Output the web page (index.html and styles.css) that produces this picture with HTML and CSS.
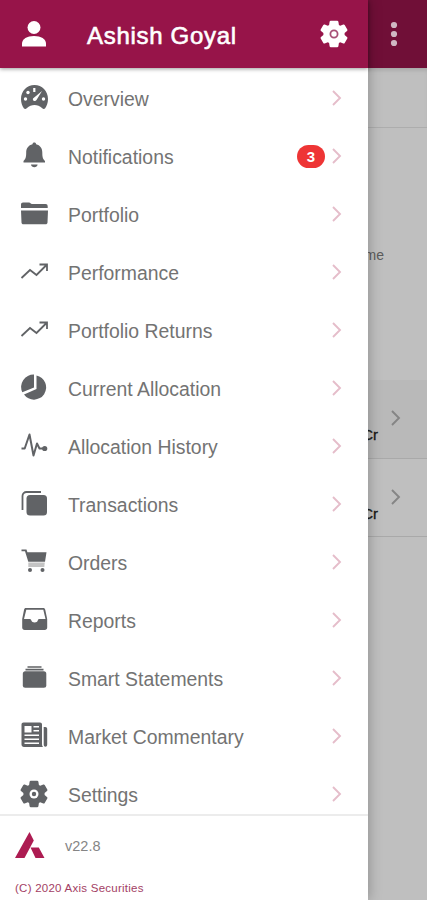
FILE: index.html
```html
<!DOCTYPE html>
<html lang="en">
<head>
    <meta charset="UTF-8">
    <meta name="viewport" content="width=device-width, initial-scale=1.0">
    <title>Axis Securities</title>
    <link rel="stylesheet" href="styles.css">
</head>
<body>
    <!-- Page behind the menu -->
    <div class="page">
        <header class="page-header">
            <svg class="more" viewBox="0 0 8 28"><circle cx="4" cy="4" r="3.1"/><circle cx="4" cy="13" r="3.1"/><circle cx="4" cy="22" r="3.1"/></svg>
        </header>
        <div class="page-tabs"></div>
        <div class="page-summary"><span>me</span></div>
        <div class="page-row shaded">
            <span>Cr</span>
            <svg class="arrow" viewBox="0 0 10 16"><path d="M1 1l7 7-7 7"/></svg>
        </div>
        <div class="page-row">
            <span>Cr</span>
            <svg class="arrow" viewBox="0 0 10 16"><path d="M1 1l7 7-7 7"/></svg>
        </div>
    </div>

    <!-- Side Menu -->
    <aside class="drawer">
        <header class="drawer-header">
            <svg class="user" viewBox="0 0 28 28"><circle cx="14" cy="7.5" r="6.5"/><path d="M2 26.5v-3c0-4.5 5-7.500 12-7.500s12 3 12 7.500v3z"/></svg>
            <h1>Ashish Goyal</h1>
            <svg class="gear" viewBox="0 0 28 28"><use href="#gear"/><circle class="ring" cx="14" cy="14" r="3.6"/></svg>
        </header>

        <nav class="menu">
            <a class="item">
                <svg class="icon" viewBox="0 0 28 28"><path d="M14.500 1C7 1 1 7 1 15c0 4 1.200 7 3 9.500 1 .8 2 .5 3-.5 4-4 11-4 15 0 1 1 2 1.300 3 .5 1.800-2.500 3-5.500 3-9.500 0-8-6-14-13.500-14z"/><g class="cut"><circle cx="5.500" cy="15" r="1.700"/><circle cx="8" cy="8.500" r="1.700"/><path d="M13.200 4h2.200v4h-2.200z"/><circle cx="23.500" cy="15" r="1.700"/><path d="M22 7l-5.500 9c-1 2-4.500 1-3.500-1.500z"/></g></svg>
                <span class="label">Overview</span>
                <svg class="arrow" viewBox="0 0 10 16"><path d="M1 1l7 7-7 7"/></svg>
            </a>
            <a class="item">
                <svg class="icon" viewBox="0 0 28 28"><path d="M14.300.5c1 0 1.800.6 1.800 1.800 4 1 6.200 4 6.200 8.200 0 5 .7 6.500 2.700 8.500v1.500H3.500V19c2-2 2.700-3.500 2.700-8.500 0-4.200 2.300-7.200 6.300-8.200 0-1.200.8-1.800 1.800-1.800zM11 22.500h6.600c-.3 3.500-6.300 3.500-6.600 0z"/></svg>
                <span class="label">Notifications</span>
                <span class="badge">3</span>
                <svg class="arrow" viewBox="0 0 10 16"><path d="M1 1l7 7-7 7"/></svg>
            </a>
            <a class="item">
                <svg class="icon" viewBox="0 0 28 28"><path d="M3 2.500h6c1.500 0 1.500 1.500 3 1.500h13.500c1.500 0 2.200.8 2.200 2.500v1.500H1V4.500c0-1.300.8-2 2-2zM1 10.500h27l-.5 12c0 1-.8 1.800-2 1.800h-22c-1.200 0-2-.8-2-1.800z"/></svg>
                <span class="label">Portfolio</span>
                <svg class="arrow" viewBox="0 0 10 16"><path d="M1 1l7 7-7 7"/></svg>
            </a>
            <a class="item">
                <svg class="icon line" viewBox="0 0 28 28"><path d="M1.500 20l8.500-8 6.500 5L26.500 7M19.500 6.500H27V13"/></svg>
                <span class="label">Performance</span>
                <svg class="arrow" viewBox="0 0 10 16"><path d="M1 1l7 7-7 7"/></svg>
            </a>
            <a class="item">
                <svg class="icon line" viewBox="0 0 28 28"><path d="M1.500 20l8.500-8 6.500 5L26.500 7M19.500 6.500H27V13"/></svg>
                <span class="label">Portfolio Returns</span>
                <svg class="arrow" viewBox="0 0 10 16"><path d="M1 1l7 7-7 7"/></svg>
            </a>
            <a class="item">
                <svg class="icon" viewBox="0 0 28 28"><path d="M14 .5v13L2.300 18.300A12.500 12.500 0 0 1 14 .5zM16.500 1.500A12.200 12.200 0 1 1 4 20.500l12.500-5.500z"/></svg>
                <span class="label">Current Allocation</span>
                <svg class="arrow" viewBox="0 0 10 16"><path d="M1 1l7 7-7 7"/></svg>
            </a>
            <a class="item">
                <svg class="icon pulse" viewBox="0 0 28 28"><path d="M1.500 16.500h3.200L9.500 2.500l4 21 3.500-12 2.500 5h5"/><circle cx="24.700" cy="16.500" r="2.600"/></svg>
                <span class="label">Allocation History</span>
                <svg class="arrow" viewBox="0 0 10 16"><path d="M1 1l7 7-7 7"/></svg>
            </a>
            <a class="item">
                <svg class="icon" viewBox="0 0 28 28"><rect x="6.500" y="5" width="20.500" height="20.500" rx="3.500"/><path class="edge" d="M2.500 20V6A4 4 0 0 1 6.500 2H21"/></svg>
                <span class="label">Transactions</span>
                <svg class="arrow" viewBox="0 0 10 16"><path d="M1 1l7 7-7 7"/></svg>
            </a>
            <a class="item">
                <svg class="icon" viewBox="0 0 28 28"><path d="M1.500 1.500h5l.9 2.700H26.500L25 13.800H8.300L5 3.300H1.500z"/><path class="soft" d="M8.300 14.500h16.500l-.5 4.500H8.300z"/><circle cx="10" cy="22" r="2"/><circle cx="22.500" cy="22" r="2"/></svg>
                <span class="label">Orders</span>
                <svg class="arrow" viewBox="0 0 10 16"><path d="M1 1l7 7-7 7"/></svg>
            </a>
            <a class="item">
                <svg class="icon" viewBox="0 0 28 28"><path fill-rule="evenodd" d="M6 2h17c1.400 0 2 .6 2.300 2L27.200 13v8.500c0 1.500-1 2.500-2.500 2.500h-20c-1.500 0-2.500-1-2.500-2.500V13L4 4c.3-1.400.8-2 2-2zm.3 1.700L4 13h6c1.500 0 1 3.500 4.700 3.500S17.500 13 19 13h6.500L23.300 3.700z"/></svg>
                <span class="label">Reports</span>
                <svg class="arrow" viewBox="0 0 10 16"><path d="M1 1l7 7-7 7"/></svg>
            </a>
            <a class="item">
                <svg class="icon" viewBox="0 0 28 28"><rect x="2.800" y="7.300" width="23.500" height="16.500" rx="2.500"/><path d="M7.500 2.300h14v1.500h-14zM5.500 4.700h18v1.800h-18z"/></svg>
                <span class="label">Smart Statements</span>
                <svg class="arrow" viewBox="0 0 10 16"><path d="M1 1l7 7-7 7"/></svg>
            </a>
            <a class="item">
                <svg class="icon" viewBox="0 0 28 28"><path d="M3.500.5H20c1.200 0 2 .8 2 2V22c0 1.300.3 2.300 1 3H4c-1.500 0-2.500-1-2.500-2.500v-20c0-1.200.8-2 2-2zM23.700 5h1.500c1.300 0 2 .7 2 2v15.500c0 3-3.500 3-3.500 0z"/><path class="cut" d="M4.500 4h7v6.500h-7zM13.500 4H19v1.500h-5.500zM13.500 8H19v1.500h-5.500zM4.500 12.500H19V14H4.500zM4.500 16.500H19V18H4.500zM4.500 20.500H19V22H4.500z"/></svg>
                <span class="label">Market Commentary</span>
                <svg class="arrow" viewBox="0 0 10 16"><path d="M1 1l7 7-7 7"/></svg>
            </a>
            <a class="item">
                <svg class="icon" viewBox="0 0 28 28">
                    <path id="gear" d="M10.800.7h6.400q1 0 1.200 1l.5 3.200 1.300.8 3.100-1.200q.9-.3 1.400.5l2.600 4.500q.5.800-.3 1.400L24.600 13v2l2.400 2.100q.8.600.3 1.400L24.700 23q-.5.800-1.400.5l-3.100-1.200-1.300.8-.5 3.200q-.2 1-1.200 1h-6.400q-1 0-1.200-1l-.5-3.200-1.300-.8-3.100 1.200q-.9.300-1.400-.5L.7 18.500q-.5-.8.3-1.400L3.400 15v-2L1 10.900q-.8-.6-.3-1.400L3.300 5q.5-.8 1.400-.5l3.100 1.200 1.300-.8.500-3.200q.2-1 1.200-1z"/>
                    <circle class="cut" cx="14" cy="14" r="4.500"/><circle cx="14" cy="14" r="2.200"/>
                </svg>
                <span class="label">Settings</span>
                <svg class="arrow" viewBox="0 0 10 16"><path d="M1 1l7 7-7 7"/></svg>
            </a>
        </nav>

        <footer class="drawer-footer">
            <div class="version">
                <svg class="logo" viewBox="0 0 30 27"><path d="M14.500 0l4.300 8.500L9.500 26H0zM15.500 15.500h8.300L29.500 26H20.500z"/></svg>
                <span>v22.8</span>
            </div>
            <p class="copyright">(C) 2020 Axis Securities</p>
        </footer>
    </aside>
</body>
</html>
```
FILE: styles.css
```css
/* General Styles */
* {
    box-sizing: border-box;
}

body {
    font-family: 'Liberation Sans', Arial, sans-serif;
    margin: 0;
    height: 900px;
    position: relative;
    overflow: hidden;
    background: #bfbfbf;
}

svg {
    display: block;
    flex: none;
}

.arrow {
    width: 10px;
    height: 16px;
    fill: none;
    stroke: #e5bdca;
    stroke-width: 1.9;
}

/* Page behind the menu */
.page-header {
    height: 68px;
    background: #700f37;
    display: flex;
    justify-content: flex-end;
    padding: 21px 29px 0 0;
}

.more {
    width: 8px;
    height: 28px;
    fill: #d0b8c3;
}

.page-tabs {
    height: 60px;
    border-bottom: 1px solid #adadad;
    box-shadow: inset 0 4px 4px -2px #a5a5a5;
}

.page-summary {
    height: 252px;
    padding: 119px 43px 0 0;
    text-align: right;
    font-size: 14px;
    line-height: 16px;
    color: #5c5c5c;
}

.page-row {
    height: 78px;
    display: flex;
    justify-content: flex-end;
    gap: 13px;
    padding: 30px 26px 0 0;
    border-bottom: 1px solid #a9a9a9;
    font-size: 15px;
    color: #151515;
    -webkit-text-stroke: 0.3px #151515;
}

.page-row span {
    padding-top: 16px;
}

.page-row.shaded {
    height: 79px;
    background: #b9b9b9;
}

.page-row .arrow {
    stroke: #858585;
}

/* Side Menu */
.drawer {
    position: absolute;
    top: 0;
    left: 0;
    width: 368px;
    height: 900px;
    display: flex;
    flex-direction: column;
    background: #fff;
    box-shadow: 1px 0 12px rgba(0, 0, 0, 0.25);
}

.drawer-header {
    height: 68px;
    flex: none;
    display: flex;
    align-items: center;
    padding: 0 20px;
    background: #971449;
    box-shadow: 0 1px 4px rgba(0, 0, 0, 0.4);
    color: #fff;
    z-index: 1;
}

.user,
.gear {
    width: 28px;
    height: 28px;
    fill: #fff;
}

.ring {
    fill: #fff;
    stroke: #a75076;
    stroke-width: 1.8;
}

h1 {
    flex: 1;
    margin: 3px 0 0 39px;
    font-size: 24px;
    font-weight: normal;
    line-height: 28px;
    letter-spacing: 0.7px;
    -webkit-text-stroke: 0.6px #fff;
}

.menu {
    flex: 1;
    min-height: 0;
    overflow: hidden;
    padding-top: 1px;
}

.item {
    height: 58px;
    display: flex;
    align-items: center;
    padding: 0 26px 0 20px;
}

.icon {
    width: 28px;
    height: 28px;
    margin-right: 20px;
    fill: #616366;
}

.icon .cut {
    fill: #fff;
}

.icon .soft {
    fill: #c4c4c4;
}

.icon .edge,
.icon.line {
    fill: none;
    stroke: #616366;
    stroke-width: 1.8;
}

.icon.pulse path {
    fill: none;
    stroke: #616366;
    stroke-width: 2;
    stroke-linejoin: round;
}

.label {
    flex: 1;
    padding-top: 2px;
    font-size: 19.4px;
    color: #737373;
}

.badge {
    width: 28px;
    height: 23px;
    margin-right: 7px;
    border-radius: 12px;
    background: #ee3535;
    color: #fff;
    font-size: 15px;
    font-weight: bold;
    line-height: 23px;
    text-align: center;
}

.item .arrow {
    margin-top: -1px;
}

.drawer-footer {
    height: 86px;
    flex: none;
    border-top: 2px solid #ececec;
    padding: 16px 15px 0;
}

.version {
    display: flex;
    align-items: center;
    gap: 20px;
    font-size: 14.5px;
    color: #858585;
}

.logo {
    width: 30px;
    height: 27px;
    fill: #ad1c52;
}

.copyright {
    margin: 23px 0 0;
    font-size: 11.5px;
    line-height: 13px;
    letter-spacing: 0.25px;
    color: #a33e64;
}
```
